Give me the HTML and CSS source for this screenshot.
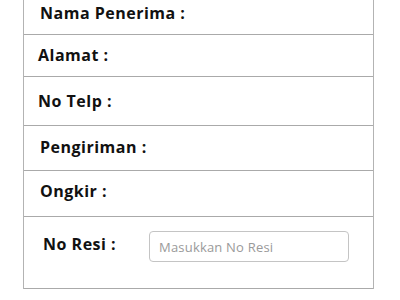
FILE: index.html
```html
<!DOCTYPE html>
<html>
<head>
<meta charset="utf-8">
<link rel="stylesheet" href="styles.css">
</head>
<body>
<div class="table">
  <div class="row r1"><span class="label">Nama Penerima :</span></div>
  <div class="row r2"><span class="label">Alamat :</span></div>
  <div class="row r3"><span class="label">No Telp :</span></div>
  <div class="row r4"><span class="label">Pengiriman :</span></div>
  <div class="row r5"><span class="label">Ongkir :</span></div>
  <div class="row r6"><span class="label">No Resi :</span><input class="resi" type="text" placeholder="Masukkan No Resi"></div>
</div>
</body>
</html>
```
FILE: styles.css
```css
html, body {
  margin: 0;
  padding: 0;
  background: #fff;
}
body {
  font-family: "Open Sans", "DejaVu Sans", sans-serif;
}
.table {
  margin-left: 23px;
  width: 349px;
  border-left: 1px solid #b3b3b3;
  border-right: 1px solid #b3b3b3;
}
.row {
  display: flex;
  align-items: flex-start;
  border-bottom: 1px solid #aaa;
  box-sizing: border-box;
}
.label {
  font-size: 16px;
  font-weight: 700;
  color: #111;
  letter-spacing: 0.5px;
  line-height: 22px;
  white-space: nowrap;
}
.r1 { height: 35px; padding: 2px 0 0 16px; }
.r2 { height: 42px; padding: 9px 0 0 14px; }
.r3 { height: 49px; padding: 13px 0 0 14px; }
.r4 { height: 45px; padding: 10px 0 0 16px; }
.r5 { height: 46px; padding: 9px 0 0 16px; }
.r6 { height: 72px; padding: 16px 0 0 19px; }
.resi {
  margin-left: auto;
  margin-right: 24px;
  margin-top: -2px;
  width: 200px;
  height: 31px;
  box-sizing: border-box;
  border: 1px solid #c4c4c4;
  border-radius: 4px;
  padding: 0 9px;
  font-family: "Open Sans", sans-serif;
  font-size: 13px;
  letter-spacing: 0.2px;
  color: #333;
  outline: none;
}
.resi::placeholder {
  color: #9a9a9a;
}
```
